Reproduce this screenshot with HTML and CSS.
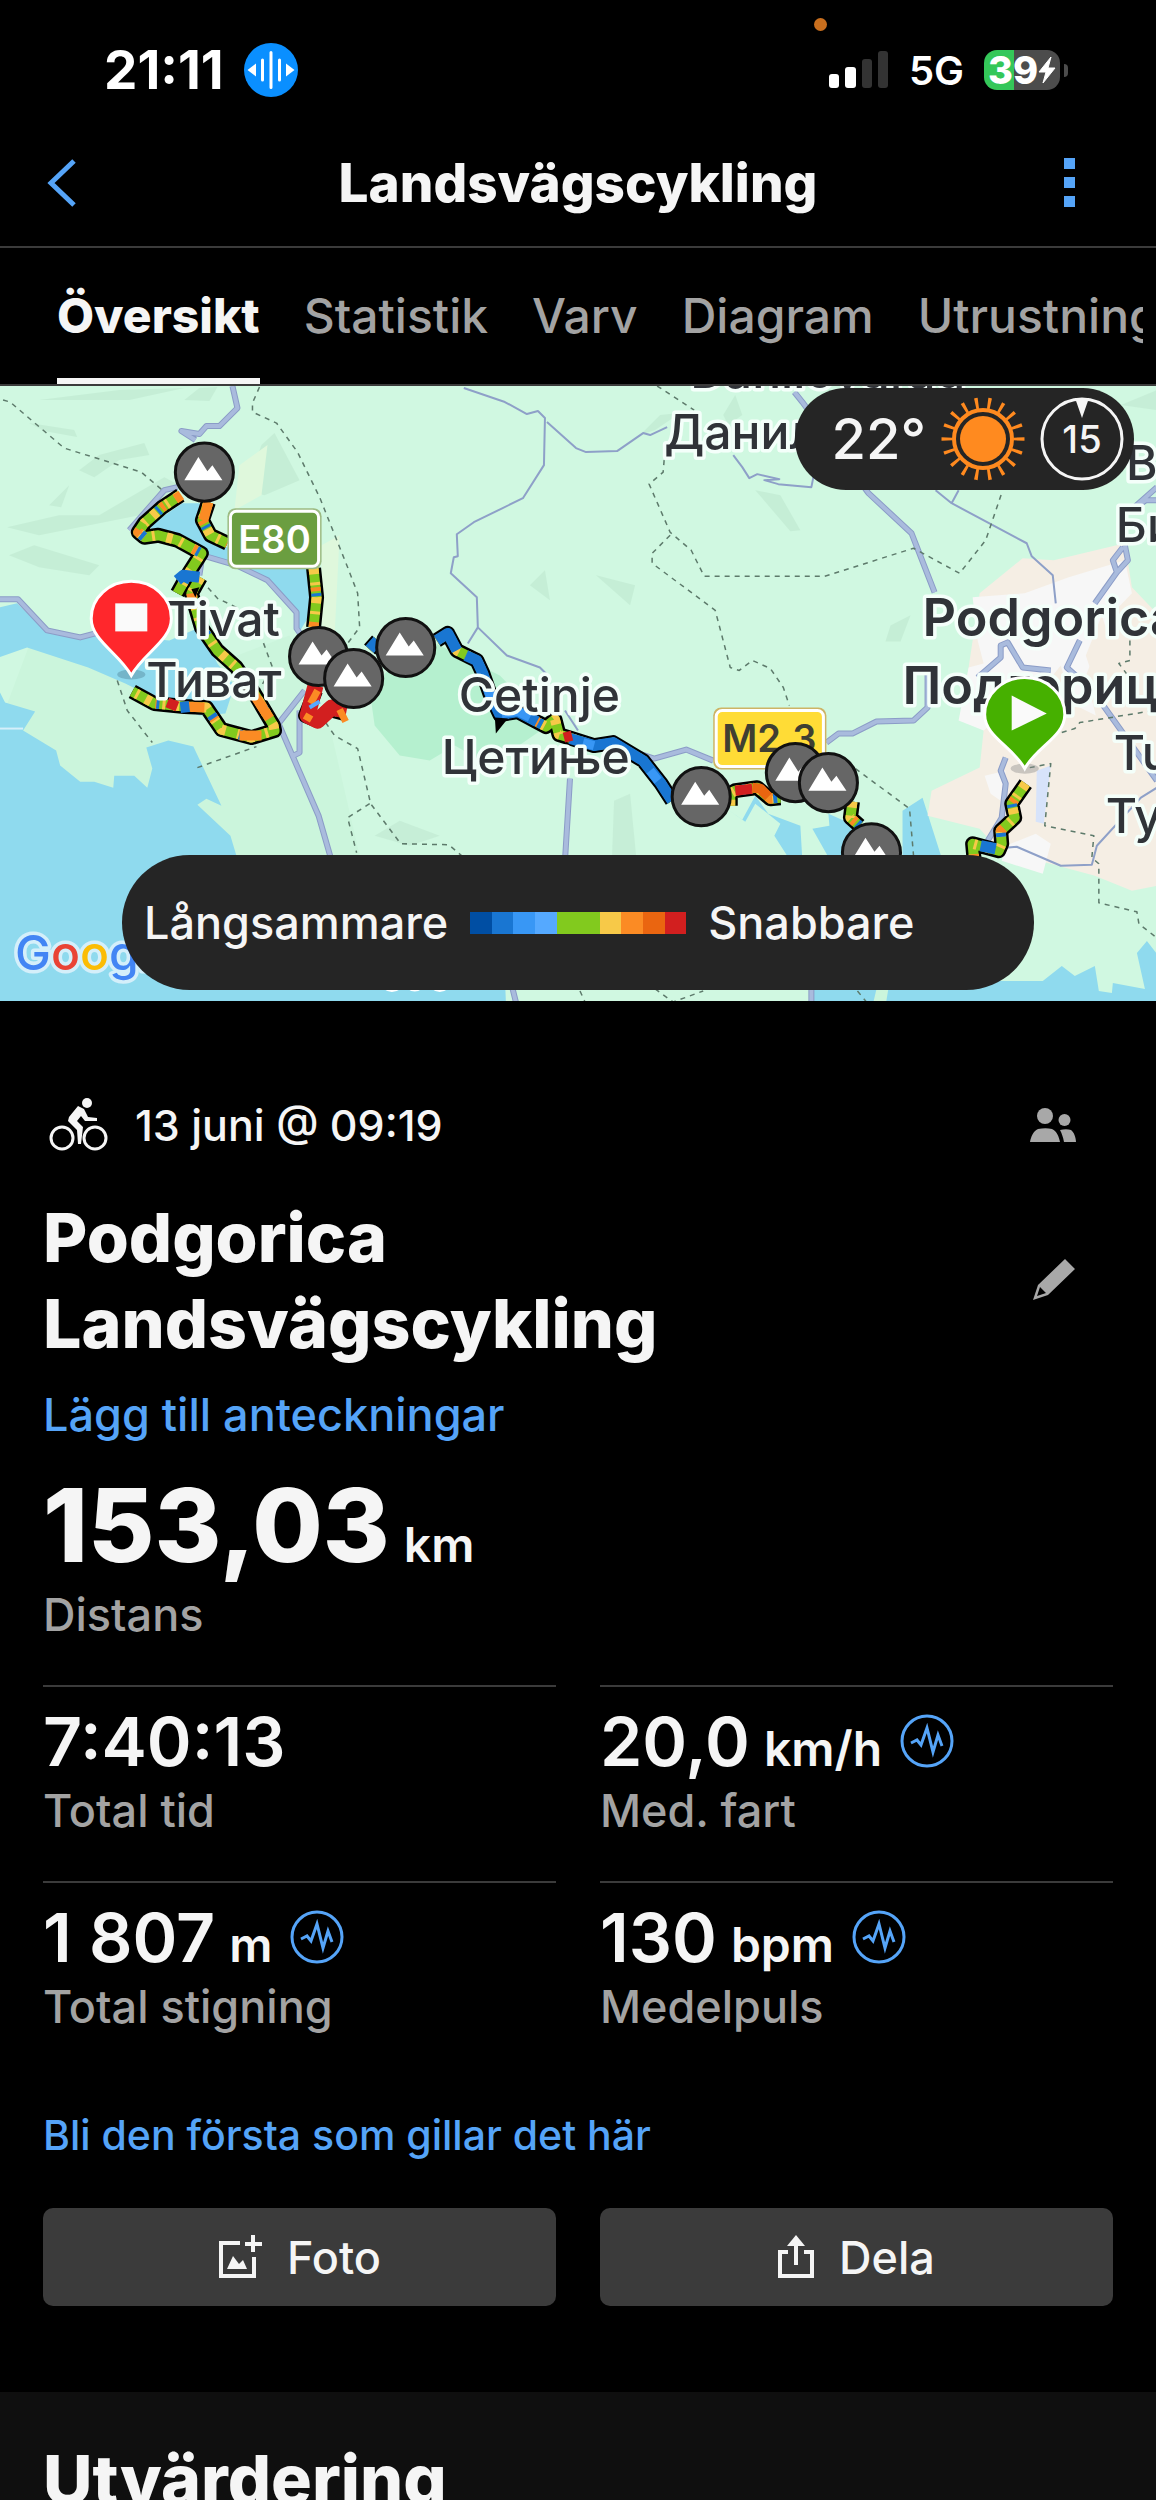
FILE: index.html
```html
<!DOCTYPE html>
<html lang="sv">
<head>
    <meta charset="UTF-8">
    <meta name="viewport" content="width=device-width, initial-scale=1.0">
    <title>Landsvägscykling</title>
    <link rel="stylesheet" href="styles.css">
</head>
<body>
    <!-- Statusrad -->
    <div class="status-bar">
        <span class="rec-dot"></span>
        <div class="status-left">
            <span class="clock">21:11</span>
            <svg class="voice-icon" viewBox="0 0 54 54" aria-hidden="true">
                <circle cx="27" cy="27" r="27" fill="#0a8fff"/>
                <path d="M18.500 17v20M27 9.500v35M35.500 17v20" stroke="#fff" stroke-width="3" stroke-linecap="round"/>
                <path d="M12 20.500v13L3.500 27zM42 20.500v13l8.500-6.500z" fill="#fff"/>
            </svg>
        </div>
        <div class="status-right">
            <svg class="signal-icon" viewBox="0 0 60 38" aria-hidden="true">
                <rect x="0" y="23" width="10" height="14" rx="3" fill="#fff"/>
                <rect x="16" y="16" width="11" height="21" rx="3" fill="#fff"/>
                <rect x="33" y="8" width="10" height="29" rx="3" fill="#333"/>
                <rect x="49" y="0" width="10" height="37" rx="3" fill="#333"/>
            </svg>
            <span class="network">5G</span>
            <div class="battery">
                <span>39</span>
                <svg viewBox="0 0 18 28" aria-hidden="true"><path d="M13 1L1 16h7L5 27 17 12h-7z" fill="#fff" stroke="#fff" stroke-linejoin="round"/></svg>
            </div>
        </div>
    </div>

    <header class="top-bar">
        <button class="icon-btn" aria-label="Tillbaka">
            <svg width="30" height="48" viewBox="0 0 30 48"><path d="M27 2L4 24l23 22" fill="none" stroke="#55a4f8" stroke-width="5"/></svg>
        </button>
        <h1>Landsvägscykling</h1>
        <button class="icon-btn" aria-label="Mer">
            <svg width="12" height="50" viewBox="0 0 12 50"><path d="M0 0h11v11H0zM0 19h11v11H0zM0 38h11v11H0z" fill="#55a4f8"/></svg>
        </button>
    </header>

    <nav class="tabs">
        <a href="#" class="active">Översikt</a>
        <a href="#">Statistik</a>
        <a href="#">Varv</a>
        <a href="#">Diagram</a>
        <a href="#">Utrustning</a>
    </nav>

    <!-- Karta -->
    <div class="map">
        <svg class="map-canvas" viewBox="0 1 1156 614" preserveAspectRatio="xMidYMid slice">
            <defs>
                <g id="peak">
                    <circle r="29" fill="#666" stroke="#111" stroke-width="3"/>
                    <path d="M-20 8L-6-15 3-1 8-7 18 8z" fill="#fff"/>
                </g>
                <path id="roads" d="M233 1L238 23 220 41 207 41 200 49 182 46 196 55M178 102L165 105 130 145M0 214H19L48 245 81 252 100 247M200 190L203 170 237 180 268 195 297 227V243L310 262M305 305L279 338 319 430 332 475M279 338L265 325M300 325V367L294 370M570 393L565 475M512 600L516 616M794 7L802 17 868 108 911 148 934 207M1156 102L1130 125M1156 115L1145 115 1130 125M1122 162L1112 175 1116 187 1127 175 1124 160M1116 187L1094 218M977 292L1000 272V260L1007 257 1022 282 1050 285M1079 255L1066 282 1075 290M639 368L654 373 686 364 713 375M826 357L838 348 852 348 876 336 913 335 927 322V285M1005 372L1000 385 1005 398 1001 432 987 455M1101 318L1156 395M811 600V616"/>
                <path id="route" d="M181 110L163 122 145 138 139 147 145 152 159 150 178 155 202 168 188 190 178 208M209 117L203 135 211 150 228 158M314 183L317 212 314 242M201 192L192 208 202 242 218 265 237 282 255 308 274 340 275 345 252 352 222 344 207 322 185 321 155 318 133 306M316 305L306 330 318 335 330 324 345 328M370 264L378 255M437 255L448 248 457 265 477 275 483 288 490 308 500 329 518 326 546 341 555 334 559 349 572 353 594 360 613 357 643 375 661 398 672 415M730 420L730 408 735 405 757 402 770 413 780 412M852 416L850 432 859 440M1025 398L1011 418 1014 432 1000 445 1001 458 998 465 972 458 974 480"/>
            </defs>
            <rect width="1156" height="616" fill="#d0f8e1"/>
            <!-- Terräng -->
            <path d="M0 340L30 260 160 300 290 250 330 340 360 470 470 480 480 616 0 616z" fill="#cbf5dc"/>
            <path d="M370 305L420 250 500 290 548 340 490 380 455 360 430 375 400 370 375 340z" fill="#b5f0cf"/>
            <g fill="#bfe8d0" opacity=".6">
                <path d="M8 142L60 130 100 130 165 92 180 100 140 130 90 140 40 150z"/>
                <path d="M10 170L35 160 100 180 90 190 40 182z"/>
                <path d="M245 105L262 60 275 48 300 95 265 110z"/>
                <path d="M50 120L70 100 62 122zM80 85L100 70 145 58 150 70 120 75 95 92zM185 15L200 3 218 2 210 16z"/>
                <path d="M40 15L120 5 185 3 130 15zM30 38L75 45 78 52 45 46z"/>
                <path d="M596 190L635 200 630 220zM755 105L780 110 800 145 790 146zM890 240L910 230 900 256 885 256z"/>
                <path d="M723 30L735 10 742 30 728 40zM614 415L630 408 636 470 612 470zM375 450L400 435 440 450 410 460z"/>
                <path d="M640 50L660 30 680 28 655 45zM1120 20L1156 5 1156 25zM530 200L545 185 550 215z"/>
            </g>
            <path d="M240 80L268 60 262 110 235 125zM322 160L340 150 335 250 322 240z" fill="#dff8dc"/>
            <!-- Vatten -->
            <g fill="#8fdaee">
                <path d="M183 118L200 118 213 152 228 162 266 182 307 182 311 228 299 248 298 228 268 195 229 178 203 170 178 152 148 142z"/>
                <path d="M0 222L18 218 48 247 81 253 100 248 170 255 200 242 218 278 235 300 226 328 200 330 150 310 126 298 89 282 28 262 0 272z"/>
                <path d="M0 305L6 317 36 326 24 345 57 365 61 380 81 396 95 396 114 402 115 390 135 390 148 402 153 383 147 362 169 355 194 361 222 420 207 413 198 419 231 450 237 470 300 540 505 590 506 616 0 616z"/>
                <path d="M902 425L922 412 942 475 902 475zM725 422L742 434 755 410 768 428 800 440 802 475 790 475 774 450 780 438 755 418 745 436zM812 443L829 440 828 428 855 440 860 475 830 475z"/>
                <path d="M812 620V595H998L1042 595 1061 580 1074 590 1094 580 1098 605 1111 607 1112 597 1144 603 1136 567 1146 555 1156 568V620z"/>
            </g>
            <path d="M0 343H24" stroke="#d5effa" stroke-width="2"/>
            <path d="M872 620L876 603 888 602 885 620z" fill="#cbf5dc"/>
            <!-- Tätort -->
            <path d="M968 282L979 208 1022 173 1053 175 1124 158 1131 202 1156 228V500L1131 505 1094 490 1046 477 1005 472 979 443 927 430 931 405 979 382 983 345 960 330z" fill="#f5eee4"/>
            <path d="M972 212L1024 208 1068 192 1124 175 1131 208 1110 230 1085 290 1095 330 1035 300 983 345 958 335 968 282 983 278 977 255zM1001 475L1005 460 1035 448 1050 458 1042 488zM984 390L1005 385 1000 415 990 408z" fill="#f7f7f7"/>
            <path d="M1085 270L1101 230 1120 290 1095 300zM1040 305L1060 280 1066 300z" fill="#f5eee4"/>
            <path d="M1036 385L1050 380 1043 438 1035 436z" fill="#d7e3fa"/>
            <!-- Vägar -->
            <g fill="none" stroke-linejoin="round">
                <use href="#roads" stroke="#8b9cc7" stroke-width="6"/>
                <use href="#roads" stroke="#a9bbdd" stroke-width="4"/>
                <path d="M464 3L505 17 527 29 538 26 545 33 544 80 523 113 474 137 457 149 458 171 454 172 451 188 477 212 478 242 507 270 540 282 548 290M478 242L468 258M547 37L576 63 586 67 617 66 643 48 650 50 667 42M733 70L742 82 749 93 757 89 779 94 764 95 778 99 811 102 813 92M935 105L951 118 1026 158 1031 171 1052 190 1055 218M951 118L958 105M1005 462L1016 461 1060 480 1091 479 1096 460 1140 412 1156 402M565 325L578 345" stroke="#8ea0c8" stroke-width="2"/>
                <path d="M4 15L11 17 65 63 142 87 163 105M260 2L253 18V27L277 38 298 67 320 112 348 182 358 208 360 242 348 258M202 195L218 213 237 222 263 255 273 282 259 305M118 295L128 325 153 357M198 382L257 361M326 337L335 350 358 363 371 418 401 458 449 459 462 470M370 418L348 432 357 467M657 1L694 25M664 75L663 87 649 99 670 147 691 165 704 191H824L913 163 959 188 985 155 1001 108M670 150L652 168V178L715 225 730 282 739 285 752 275 770 283 783 302 789 320M855 383L909 423 913 470M1029 382L1050 378 1044 440 1093 450 1091 472 1098 478V517L1136 526 1138 538 1156 552M1061 347L1074 343 1079 337 1153 325M1129 255L1129 275 1118 278 1127 290M655 603L673 616 703 605M580 605L585 616M857 605L866 616" stroke="#5d7a6b" stroke-width="1.500" stroke-dasharray="5 5"/>
            </g>
            <!-- Rutt, färgad efter fart -->
            <g fill="none" stroke-linejoin="round">
                <use href="#route" stroke="#000" stroke-width="15"/>
                <use href="#route" stroke="#82ca1e" stroke-width="10"/>
                <use href="#route" stroke="#f7c948" stroke-width="10" stroke-dasharray="6 8 3 12"/>
                <use href="#route" stroke="#fb8b24" stroke-width="10" stroke-dasharray="0 19 4 31 5 38"/>
                <use href="#route" stroke="#1976d2" stroke-width="10" stroke-dasharray="0 25 3 32 4 31"/>
                <path d="M209 117L204 135M182 110L176 114M192 208L193 215M250 302L270 333M185 321L205 322M240 350L262 350" stroke="#fb8b24" stroke-width="10"/>
                <path d="M178 195L184 190 200 192M437 255L448 248 457 265M466 270L477 275 483 288 490 308 500 329 518 326 537 336M570 353L594 360 613 357 643 375 661 398 672 415M370 264L378 255M980 460L995 463M181 322L190 321" stroke="#1976d2" stroke-width="11"/>
                <path d="M485 295L492 315M502 328L518 326 530 332M583 357L594 360M650 385L658 395" stroke="#3897f5" stroke-width="9"/>
                <path d="M316 300L308 330 318 335 332 322 347 325" stroke="#d21f1f" stroke-width="16"/>
                <path d="M318 305L311 318M305 330L312 334M340 324L346 336" stroke="#fb8b24" stroke-width="7"/>
                <path d="M310 322L320 316" stroke="#55a9ff" stroke-width="4"/>
                <path d="M735 405L752 403M168 317L178 321M564 352L572 350" stroke="#d21f1f" stroke-width="10"/>
                <path d="M752 402L760 403 768 411" stroke="#ea6510" stroke-width="10"/>
            </g>
            <path d="M495 332L508 333 496 348zM192 204L200 202 196 212z" fill="#000"/>
            <!-- Vägskyltar -->
            <rect x="228" y="123" width="94" height="61" rx="8" fill="#9dbb82"/>
            <rect x="231" y="126" width="88" height="55" rx="6" fill="#6b9e40" stroke="#fff" stroke-width="3"/>
            <text x="275" y="168" class="sign">E80</text>
            <rect x="713" y="322" width="113" height="62" rx="8" fill="#cdb465"/>
            <rect x="716" y="325" width="107" height="56" rx="6" fill="#ffdc36" stroke="#fff" stroke-width="3"/>
            <text x="769" y="366" class="sign dark">M2.3</text>
            <!-- Ortnamn -->
            <g class="places">
                <text x="166" y="251">Tivat</text>
                <text x="147" y="312">Тиват</text>
                <text x="459" y="326">Cetinje</text>
                <text x="442" y="388">Цетиње</text>
                <text x="690" y="3">Danilovgrad</text>
                <text x="664" y="64">Даниловград</text>
                <text x="1125" y="95">Bioče</text>
                <text x="1115" y="157">Биоче</text>
                <text x="1113" y="384">Tuzi</text>
                <text x="1105" y="447">Тузи</text>
                <text x="922" y="251" class="city">Podgorica</text>
                <text x="902" y="318" class="city">Подгорица</text>
            </g>
            <text x="16" y="584" class="google"><tspan fill="#4285f4">G</tspan><tspan fill="#e94335">o</tspan><tspan fill="#fbbc05">o</tspan><tspan fill="#4285f4">g</tspan><tspan fill="#34a853">l</tspan><tspan fill="#e94335">e</tspan></text>
            <path d="M384 603q8 6 17 0zM408 603q7 5 14 0zM432 603q8 6 16 0z" fill="#fff"/>
            <!-- Stigningar -->
            <use href="#peak" x="205" y="87"/>
            <use href="#peak" x="319" y="271"/>
            <use href="#peak" x="354" y="293"/>
            <use href="#peak" x="406" y="262"/>
            <use href="#peak" x="701" y="411"/>
            <use href="#peak" x="795" y="387"/>
            <use href="#peak" x="828" y="397"/>
            <use href="#peak" x="871" y="467"/>
            <!-- Start och mål -->
            <ellipse cx="132" cy="289" rx="14" ry="5" fill="#4a7d90" opacity=".4"/>
            <path d="M132 290C120 268 92 255 92 233a40 37 0 0 1 80 0C172 255 144 268 132 290z" fill="#ff272c" stroke="#fff" stroke-width="3"/>
            <rect x="116" y="218" width="32" height="28" fill="#fafafa"/>
            <ellipse cx="1024" cy="383" rx="14" ry="5" fill="#888" opacity=".4"/>
            <path d="M1024 383C1012 361 984 351 984 329a40 37 0 0 1 80 0C1064 351 1036 361 1024 383z" fill="#46b000" stroke="#fff" stroke-width="3"/>
            <path d="M1011 310L1046 328 1011 345z" fill="#fafafa"/>
        </svg>

        <div class="weather">
            <span class="temp">22°</span>
            <svg width="84" height="84" viewBox="-42 -42 84 84" aria-hidden="true">
                <circle r="23" fill="#ff8a1f"/>
                <circle r="29" fill="none" stroke="#ff8a1f" stroke-width="4"/>
                <circle r="36" fill="none" stroke="#ff8a1f" stroke-width="11" pathLength="180" stroke-dasharray="2.500 7.500" stroke-dashoffset="1.250"/>
            </svg>
            <svg width="84" height="84" viewBox="0 0 84 84" aria-hidden="true">
                <circle cx="42" cy="42" r="40" fill="none" stroke="#f5f5f5" stroke-width="3"/>
                <path d="M35 1h14l-7 20z" fill="#f5f5f5"/>
                <text x="42" y="56" class="wind">15</text>
            </svg>
        </div>

        <div class="legend">
            <span>Långsammare</span>
            <div class="scale">
                <i class="s1"></i><i class="s2"></i><i class="s3"></i><i class="s4"></i><i class="s5"></i><i class="s5"></i><i class="s6"></i><i class="s7"></i><i class="s8"></i><i class="s9"></i>
            </div>
            <span>Snabbare</span>
        </div>
    </div>

    <main class="summary">
        <div class="date-row">
            <svg width="60" height="54" viewBox="0 0 60 54" aria-hidden="true">
                <g fill="none" stroke="#f5f5f5" stroke-width="3">
                    <circle cx="13" cy="40" r="11"/>
                    <circle cx="46" cy="40" r="11"/>
                </g>
                <circle cx="38" cy="5" r="5" fill="#f5f5f5"/>
                <path d="M29 8l6 3 4 8 9 1v3H36l-4-5-4 5 6 6-2 17h-3l-1-14-9-9 1-4z" fill="#f5f5f5"/>
            </svg>
            <span class="date">13 juni @ 09:19</span>
            <svg class="end-icon" width="46" height="34" viewBox="0 0 46 34" fill="#a8a8a8" aria-hidden="true">
                <circle cx="15" cy="8" r="8"/>
                <circle cx="34.500" cy="12" r="6"/>
                <path d="M0 34c1-5 3-11 8-13 5-1 10-1 14 0 5 2 7 8 8 13zM30 22c4-1 8-1 11 0 3 2 5 8 5 12H34c-1-5-2-8-4-12z"/>
            </svg>
        </div>

        <div class="title-row">
            <h2>Podgorica Landsvägscykling</h2>
            <button class="icon-btn" aria-label="Redigera">
                <svg width="44" height="44" viewBox="0 0 44 44"><path fill-rule="evenodd" d="M33 1l10 10-27 26-15 5 5-15zM8 29l-3 9 9-3z" fill="#a8a8a8"/></svg>
            </button>
        </div>
        <a href="#" class="notes">Lägg till anteckningar</a>

        <div class="distance">
            <div class="value">153,03<small>km</small></div>
            <div class="label">Distans</div>
        </div>

        <div class="stats">
            <div class="stat">
                <div class="value">7:40:13</div>
                <div class="label">Total tid</div>
            </div>
            <div class="stat">
                <div class="value">20,0<small>km/h</small>
                    <svg viewBox="0 0 54 54" aria-hidden="true"><g fill="none" stroke="#55a4f8" stroke-width="3"><circle cx="27" cy="27" r="25"/><path d="M11 29l6-3 4 5 6-17 6 24 5-17 4 11"/></g></svg>
                </div>
                <div class="label">Med. fart</div>
            </div>
            <div class="stat">
                <div class="value">1&nbsp;807<small>m</small>
                    <svg viewBox="0 0 54 54" aria-hidden="true"><g fill="none" stroke="#55a4f8" stroke-width="3"><circle cx="27" cy="27" r="25"/><path d="M11 29l6-3 4 5 6-17 6 24 5-17 4 11"/></g></svg>
                </div>
                <div class="label">Total stigning</div>
            </div>
            <div class="stat">
                <div class="value">130<small>bpm</small>
                    <svg viewBox="0 0 54 54" aria-hidden="true"><g fill="none" stroke="#55a4f8" stroke-width="3"><circle cx="27" cy="27" r="25"/><path d="M11 29l6-3 4 5 6-17 6 24 5-17 4 11"/></g></svg>
                </div>
                <div class="label">Medelpuls</div>
            </div>
        </div>

        <a href="#" class="like">Bli den första som gillar det här</a>

        <div class="actions">
            <button>
                <svg width="44" height="44" viewBox="0 0 44 44" aria-hidden="true">
                    <path d="M22 8H3v33h33V22M35 0v17M27 9h17" fill="none" stroke="#f5f5f5" stroke-width="4"/>
                    <path d="M9 34l6-13 6 8 4-4 4 9z" fill="#f5f5f5"/>
                </svg>
                Foto
            </button>
            <button>
                <svg width="36" height="44" viewBox="0 0 36 44" aria-hidden="true">
                    <path d="M10 17H2v24h32V17h-8M18 30V6" fill="none" stroke="#f5f5f5" stroke-width="4"/>
                    <path d="M18 0l9 11H9z" fill="#f5f5f5"/>
                </svg>
                Dela
            </button>
        </div>
    </main>

    <section class="evaluation">
        <h2>Utvärdering</h2>
    </section>
</body>
</html>
```
FILE: styles.css
```css
* {
    box-sizing: border-box;
}
body {
    margin: 0;
    height: 100vh;
    overflow: hidden;
    background: #000;
    color: #f5f5f5;
    font-family: Inter, "Noto Sans", sans-serif;
    font-weight: 500;
}
h1, h2 {
    margin: 0;
    font-weight: 800;
}
a {
    color: #55a4f8;
    text-decoration: none;
}
button {
    font: inherit;
    color: inherit;
    border: none;
    cursor: pointer;
}
svg {
    display: block;
    flex: none;
}
.icon-btn {
    padding: 0;
    background: none;
}

/* Statusrad */
.status-bar {
    position: relative;
    display: flex;
    justify-content: space-between;
    align-items: center;
    height: 140px;
    padding: 0 96px 0 104px;
    color: #fff;
    font-weight: 600;
}
.rec-dot {
    position: absolute;
    top: 18px;
    right: 329px;
    width: 13px;
    height: 13px;
    border-radius: 50%;
    background: #c96f1e;
}
.status-left, .status-right {
    display: flex;
    align-items: center;
    gap: 20px;
}
.clock {
    font-size: 53px;
    font-weight: 700;
}
.voice-icon {
    width: 54px;
}
.signal-icon {
    width: 60px;
}
.network {
    font-size: 40px;
}
.battery {
    position: relative;
    display: flex;
    align-items: center;
    height: 40px;
    width: 76px;
    padding: 0 4px;
    border-radius: 13px;
    background: linear-gradient(90deg, #34c759 39%, #4c4c4c 39%);
    font-size: 38px;
    font-weight: 800;
}
.battery::after {
    content: "";
    position: absolute;
    right: -8px;
    top: 14px;
    width: 4px;
    height: 13px;
    border-radius: 0 4px 4px 0;
    background: #4c4c4c;
}
.battery svg {
    width: 18px;
}

/* Rubrik och flikar */
.top-bar {
    display: flex;
    align-items: center;
    height: 108px;
    padding: 0 80px 20px 47px;
    border-bottom: 2px solid #3b3b3b;
}
.top-bar h1 {
    flex: 1;
    padding-left: 15px;
    font-size: 53px;
    text-align: center;
}
.tabs {
    display: flex;
    gap: 44px;
    height: 136px;
    margin-right: 13px;
    padding-left: 57px;
    overflow: hidden;
    font-size: 48px;
    line-height: 135px;
}
.tabs a {
    color: #a3a3a3;
}
.tabs .active {
    color: #f5f5f5;
    font-weight: 800;
    border-bottom: 6px solid #f5f5f5;
}

/* Karta */
.map {
    position: relative;
    height: 617px;
    border-top: 2px solid #3b3b3b;
    overflow: hidden;
}
.map-canvas {
    width: 100%;
    height: 100%;
}
.places text, .google {
    paint-order: stroke;
    stroke: #f4fffa;
    stroke-width: 7px;
    stroke-linejoin: round;
}
.places text {
    fill: #303338;
    font-size: 48px;
    font-weight: 500;
}
.places .city {
    font-size: 52px;
    font-weight: 600;
}
.google {
    font-size: 48px;
    font-weight: 500;
    stroke: #d4effa;
}
.sign {
    fill: #fff;
    font-size: 38px;
    font-weight: 600;
    text-anchor: middle;
}
.sign.dark {
    fill: #3f3f32;
}
.weather, .legend {
    position: absolute;
    display: flex;
    align-items: center;
    background: #252525;
}
.weather {
    top: 2px;
    right: 22px;
    gap: 15px;
    height: 102px;
    padding: 0 10px 0 36px;
    border-radius: 51px;
}
.temp {
    font-size: 56px;
}
.wind {
    fill: #f5f5f5;
    font-size: 38px;
    text-anchor: middle;
}
.legend {
    left: 122px;
    right: 122px;
    bottom: 11px;
    gap: 22px;
    height: 135px;
    padding-left: 22px;
    border-radius: 68px;
    font-size: 45px;
}
.scale {
    display: flex;
    width: 216px;
    height: 22px;
}
.scale i {
    flex: 1;
}
.s1 { background: #004ea3; }
.s2 { background: #1976d2; }
.s3 { background: #3897f5; }
.s4 { background: #55a9ff; }
.s5 { background: #82ca1e; }
.s6 { background: #f7c948; }
.s7 { background: #fb8b24; }
.s8 { background: #ea6510; }
.s9 { background: #d21f1f; }

/* Sammanfattning */
.summary {
    padding: 95px 43px 86px;
}
.date-row {
    display: flex;
    align-items: center;
    gap: 26px;
    height: 58px;
    padding: 0 37px 0 6px;
}
.date {
    font-size: 43px;
}
.end-icon {
    margin-left: auto;
}
.title-row {
    display: flex;
    justify-content: space-between;
    align-items: center;
    margin-top: 40px;
    padding-right: 37px;
}
.title-row h2 {
    max-width: 700px;
    font-size: 68px;
    line-height: 86px;
}
.notes {
    display: block;
    margin-top: 19px;
    font-size: 45px;
    line-height: 60px;
}
.value {
    display: flex;
    align-items: baseline;
}
.value small {
    margin-left: 14px;
    font-size: 48px;
    font-weight: 600;
    line-height: 1;
}
.label {
    color: #a3a3a3;
    font-size: 45px;
    line-height: 60px;
}
.distance .value {
    margin-top: 20px;
    font-size: 102px;
    font-weight: 800;
    line-height: 120px;
}
.stats {
    display: grid;
    grid-template-columns: 1fr 1fr;
    column-gap: 44px;
    margin-top: 40px;
}
.stat {
    height: 196px;
    padding-top: 14px;
    border-top: 2px solid #3b3b3b;
}
.stat .value {
    font-size: 68px;
    font-weight: 600;
    line-height: 80px;
}
.stat svg {
    width: 54px;
    margin-left: 18px;
    align-self: center;
}
.like {
    display: block;
    margin-top: 28px;
    font-size: 41px;
    line-height: 60px;
}
.actions {
    display: grid;
    grid-template-columns: 1fr 1fr;
    gap: 44px;
    margin-top: 43px;
}
.actions button {
    display: flex;
    justify-content: center;
    align-items: center;
    gap: 25px;
    height: 98px;
    border-radius: 10px;
    background: #3b3b3b;
    font-size: 45px;
}
.evaluation {
    padding: 44px 43px;
    background: #0f0f0f;
}
.evaluation h2 {
    font-size: 68px;
    line-height: 86px;
}
```
